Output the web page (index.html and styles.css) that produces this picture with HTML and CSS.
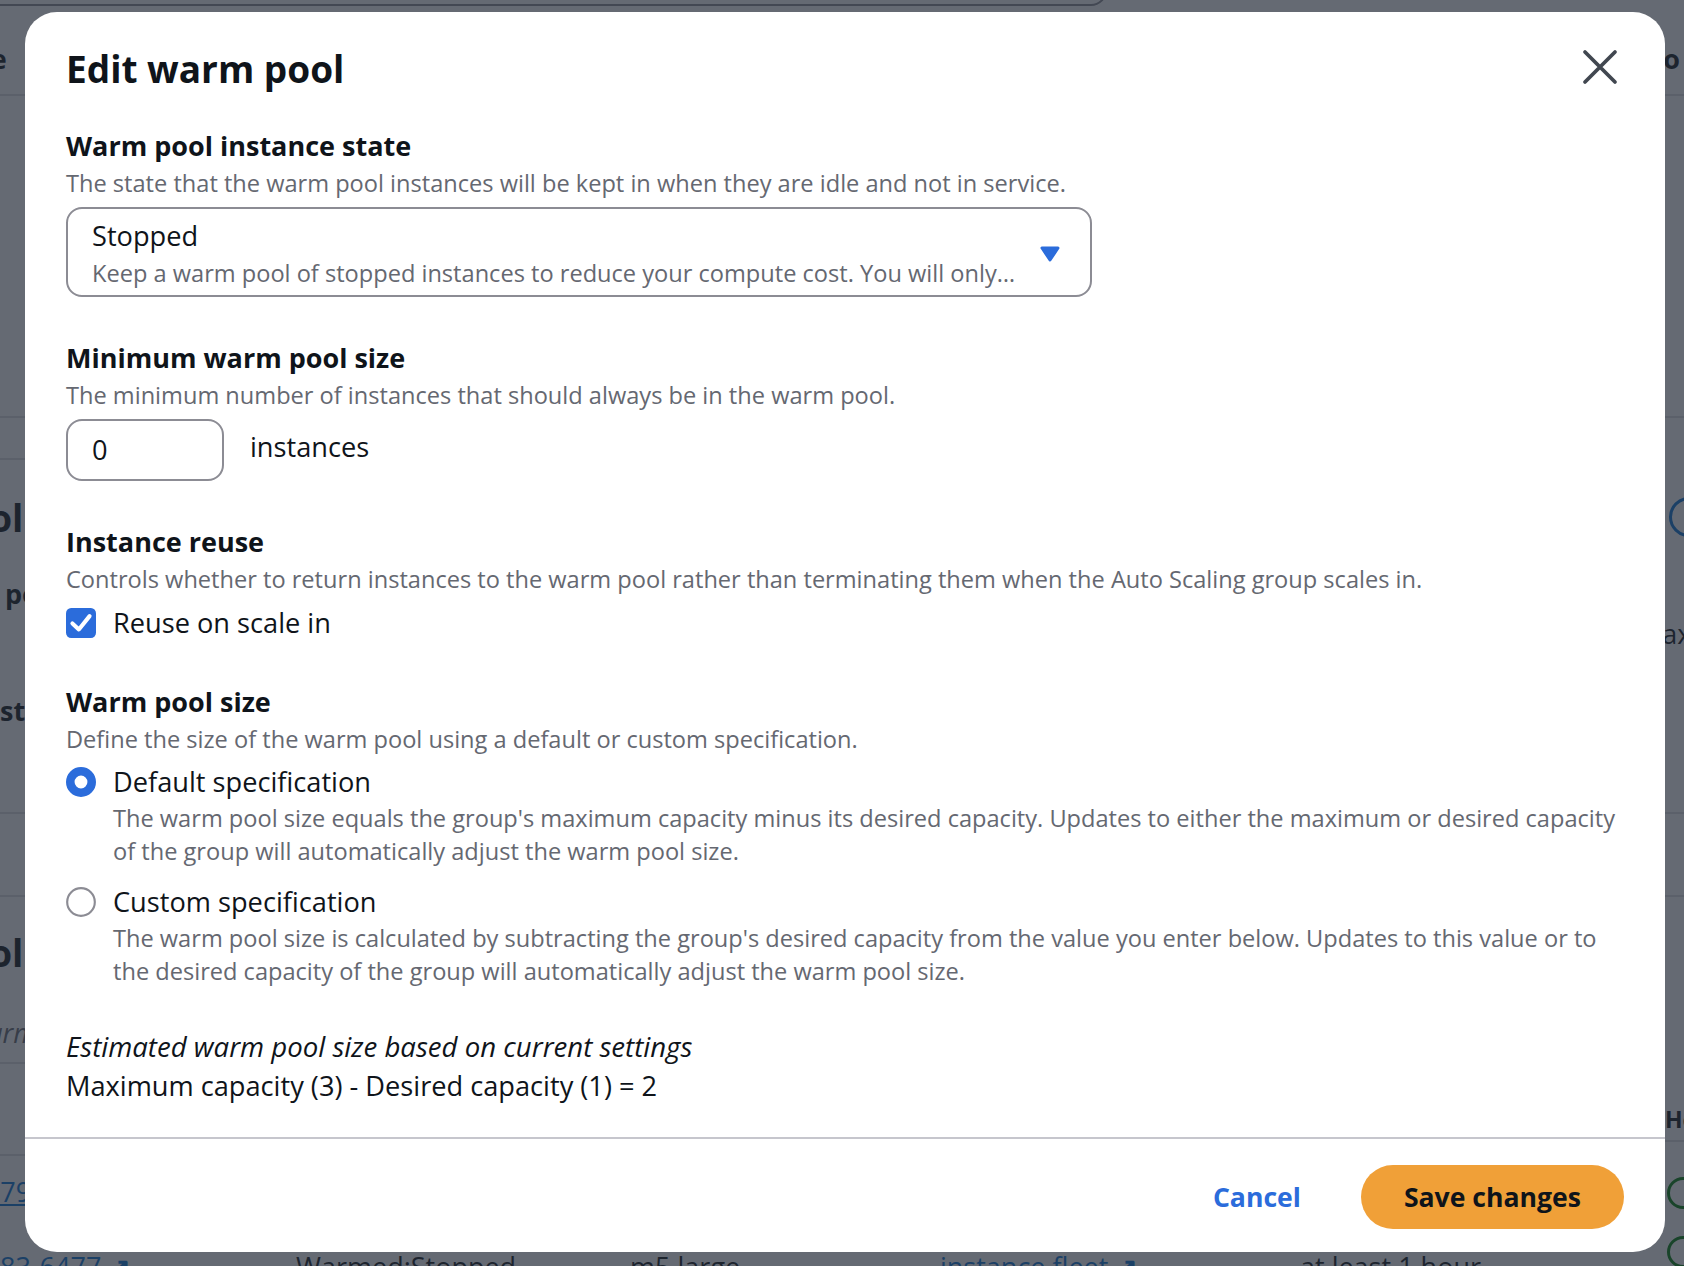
FILE: index.html
```html
<!DOCTYPE html>
<html lang="en">

<head>
    <meta charset="UTF-8">
    <meta name="viewport" content="width=device-width, initial-scale=1.0">
    <title>Edit warm pool</title>
    <link rel="stylesheet" href="styles.css">
</head>

<body>
    <!-- page behind the modal, only its edges show -->
    <div class="page">
        <div class="page-card"></div>
        <div class="rule rule-left" style="top: 94px"></div>
        <div class="rule rule-left" style="top: 416px"></div>
        <div class="rule rule-left" style="top: 458px"></div>
        <div class="rule rule-left" style="top: 812px"></div>
        <div class="rule rule-left" style="top: 895px"></div>
        <div class="rule rule-left" style="top: 1062px"></div>
        <div class="rule rule-left" style="top: 1154px"></div>
        <div class="rule rule-right" style="top: 94px"></div>
        <div class="rule rule-right" style="top: 416px"></div>
        <div class="rule rule-right" style="top: 812px"></div>
        <div class="rule rule-right" style="top: 895px"></div>
        <div class="rule rule-right" style="top: 1140px"></div>

        <span class="frag frag-bold" style="top: 41px; left: -74px">Name</span>
        <span class="frag frag-title" style="top: 494px; left: -178px">Warm pool</span>
        <span class="frag frag-bold" style="top: 576px; left: 5px">pool size</span>
        <span class="frag frag-bold" style="top: 693px; left: 0">state</span>
        <span class="frag frag-title" style="top: 929px; left: -178px">Warm pool</span>
        <span class="frag frag-italic" style="top: 1015px; left: -32px">warm</span>
        <span class="frag frag-link" style="top: 1174px; left: -106px">i-0ab4c979</span>

        <span class="frag" style="top: 1249px; left: 0"><span class="frag-link">83-6477</span> <span class="ext">&#8599;</span></span>
        <span class="frag" style="top: 1249px; left: 296px">Warmed:Stopped</span>
        <span class="frag" style="top: 1249px; left: 630px">m5.large</span>
        <span class="frag" style="top: 1249px; left: 940px"><span class="frag-link">instance fleet</span> <span class="ext">&#8599;</span></span>
        <span class="frag" style="top: 1249px; left: 1300px">at least 1 hour</span>

        <span class="frag frag-bold" style="top: 41px; left: 1648px">Lo</span>
        <span class="ring" style="top: 497px; left: 1669px"></span>
        <span class="frag" style="top: 616px; left: 1638px">Max</span>
        <span class="frag frag-bold frag-small" style="top: 1101px; left: 1665px">He</span>
        <span class="ok" style="top: 1177px; left: 1667px"></span>
        <span class="ok" style="top: 1236px; left: 1667px"></span>
    </div>

    <div class="overlay">
        <div class="modal">
            <div class="modal-header">
                <h2>Edit warm pool</h2>
                <button class="close" aria-label="Close">
                    <svg viewBox="0 0 16 16" width="40" height="40">
                        <path d="M2 2l12 12M14 2L2 14" fill="none" stroke="#414750" stroke-width="1.5" stroke-linecap="round"/>
                    </svg>
                </button>
            </div>

            <div class="modal-body">
                <div class="field">
                    <div class="label">Warm pool instance state</div>
                    <div class="desc">The state that the warm pool instances will be kept in when they are idle and not in service.</div>
                    <div class="select">
                        <div class="select-value">
                            <div class="select-title">Stopped</div>
                            <div class="select-desc">Keep a warm pool of stopped instances to reduce your compute cost. You will only pay for storage and elastic IP addresses attached to the instances.</div>
                        </div>
                        <svg viewBox="0 0 16 16" width="32" height="32">
                            <path d="M4 5h8l-4 6-4-6z" fill="#2b6cdb" stroke="#2b6cdb" stroke-width="1.5" stroke-linejoin="round"/>
                        </svg>
                    </div>
                </div>

                <div class="field">
                    <div class="label">Minimum warm pool size</div>
                    <div class="desc">The minimum number of instances that should always be in the warm pool.</div>
                    <div class="size-row">
                        <div class="number-input">0</div>
                        <span class="unit">instances</span>
                    </div>
                </div>

                <div class="field">
                    <div class="label">Instance reuse</div>
                    <div class="desc">Controls whether to return instances to the warm pool rather than terminating them when the Auto Scaling group scales in.</div>
                    <div class="check-row">
                        <svg viewBox="0 0 14 14" width="30" height="30">
                            <rect x="0" y="0" width="14" height="14" rx="2.4" fill="#2b6cdb"/>
                            <polyline points="3,7.2 6,10 11,3.8" fill="none" stroke="#fff" stroke-width="1.9" stroke-linecap="round" stroke-linejoin="round"/>
                        </svg>
                        <span>Reuse on scale in</span>
                    </div>
                </div>

                <div class="field">
                    <div class="label">Warm pool size</div>
                    <div class="desc">Define the size of the warm pool using a default or custom specification.</div>
                    <div class="radio radio-first">
                        <div class="radio-row">
                            <svg viewBox="0 0 14 14" width="30" height="30">
                                <circle cx="7" cy="7" r="5" fill="#fff" stroke="#2b6cdb" stroke-width="4"/>
                            </svg>
                            <span>Default specification</span>
                        </div>
                        <div class="radio-desc">The warm pool size equals the group's maximum capacity minus its desired capacity. Updates to either the maximum or desired capacity of the group will automatically adjust the warm pool size.</div>
                    </div>
                    <div class="radio">
                        <div class="radio-row">
                            <svg viewBox="0 0 14 14" width="30" height="30">
                                <circle cx="7" cy="7" r="6.45" fill="#fff" stroke="#8c8c94" stroke-width="1"/>
                            </svg>
                            <span>Custom specification</span>
                        </div>
                        <div class="radio-desc">The warm pool size is calculated by subtracting the group's desired capacity from the value you enter below. Updates to this value or to the desired capacity of the group will automatically adjust the warm pool size.</div>
                    </div>
                </div>

                <div class="estimate">
                    <div class="estimate-title">Estimated warm pool size based on current settings</div>
                    <div>Maximum capacity (3) - Desired capacity (1) = 2</div>
                </div>
            </div>

            <div class="modal-footer">
                <button class="btn-link">Cancel</button>
                <button class="btn-primary">Save changes</button>
            </div>
        </div>
    </div>
</body>
</html>
```
FILE: styles.css
```css
* {
    margin: 0;
    padding: 0;
    box-sizing: border-box;
}

body {
    font-family: "Open Sans", "Noto Sans", sans-serif;
    color: #0f141a;
    width: 1684px;
    height: 1266px;
    overflow: hidden;
}

/* ---------- page underneath ---------- */

.page {
    position: fixed;
    inset: 0;
    background-color: #fff;
    overflow: hidden;
}

.page-card {
    position: absolute;
    top: -40px;
    left: -20px;
    width: 1127px;
    height: 46px;
    border: 2px solid #8c8c94;
    border-radius: 16px;
}

.rule {
    position: absolute;
    height: 2px;
    width: 70px;
    background-color: #dcdee2;
}

.rule-left {
    left: 0;
}

.rule-right {
    right: 0;
}

.frag {
    position: absolute;
    white-space: nowrap;
    font-size: 27px;
    line-height: 36px;
}

.frag-bold {
    font-weight: 700;
}

.frag-small {
    font-size: 23px;
}

.frag-title {
    font-size: 37px;
    line-height: 48px;
    font-weight: 700;
}

.frag-italic {
    font-style: italic;
    color: #656871;
}

.frag-link {
    color: #0972d3;
    text-decoration: underline;
}

.ext {
    color: #0972d3;
    font-weight: 700;
}

.ring {
    position: absolute;
    width: 40px;
    height: 40px;
    border: 3px solid #0972d3;
    border-radius: 50%;
}

.ok {
    position: absolute;
    width: 32px;
    height: 32px;
    border: 3px solid #037f0c;
    border-radius: 50%;
}

/* ---------- modal ---------- */

.overlay {
    position: fixed;
    inset: 0;
    background-color: rgba(35, 43, 55, 0.7);
    padding: 12px 0 0 25px;
}

.modal {
    width: 1640px;
    background-color: #fff;
    border-radius: 32px;
    overflow: hidden;
}

.modal-header {
    display: flex;
    justify-content: space-between;
    align-items: center;
    padding: 33px 41px 0 41px;
}

.modal-header h2 {
    font-size: 37px;
    line-height: 48px;
    font-weight: 700;
}

.close {
    background: none;
    border: none;
    padding: 4px;
    display: flex;
    margin-top: -4px;
}

.modal-body {
    padding: 35px 41px 31px 41px;
    display: flex;
    flex-direction: column;
    gap: 43px;
}

.label {
    font-size: 27px;
    line-height: 36px;
    font-weight: 700;
}

.desc {
    margin-top: 3px;
    font-size: 23.6px;
    line-height: 32px;
    color: #656871;
}

/* select */

.select {
    margin-top: 8px;
    width: 1026px;
    display: flex;
    align-items: center;
    border: 2px solid #8c8c94;
    border-radius: 16px;
    padding: 10px 24px 6px 24px;
}

.select-value {
    flex: 1;
    min-width: 0;
    padding-right: 18px;
}

.select-title {
    font-size: 27.2px;
    line-height: 34px;
}

.select-desc {
    margin-top: 4px;
    font-size: 23.6px;
    line-height: 32px;
    color: #656871;
    white-space: nowrap;
    overflow: hidden;
    text-overflow: ellipsis;
}

/* number input */

.size-row {
    margin-top: 8px;
    display: flex;
    align-items: flex-start;
    gap: 26px;
}

.number-input {
    width: 158px;
    height: 62px;
    border: 2px solid #8c8c94;
    border-radius: 16px;
    padding: 0 24px;
    font-size: 27.2px;
    line-height: 58px;
}

.unit {
    font-size: 27.2px;
    line-height: 36px;
    padding-top: 10px;
}

/* checkbox + radio */

.check-row,
.radio-row {
    display: flex;
    align-items: center;
    gap: 17px;
    font-size: 27.2px;
    line-height: 36px;
}

.check-row {
    margin-top: 10px;
}

.radio {
    margin-top: 16px;
}

.radio-first {
    margin-top: 9px;
}

.radio-desc {
    margin-top: 2px;
    padding-left: 47px;
    font-size: 23.6px;
    line-height: 33px;
    color: #656871;
}

/* estimate */

.estimate {
    margin-top: -5px;
    font-size: 27.2px;
    line-height: 40px;
}

.estimate-title {
    font-style: italic;
    font-size: 27.6px;
}

/* footer */

.modal-footer {
    border-top: 2px solid #c6c6cd;
    padding: 26px 41px 23px 41px;
    display: flex;
    justify-content: flex-end;
    align-items: center;
}

.btn-link {
    background: none;
    border: none;
    font-family: inherit;
    font-size: 26.6px;
    font-weight: 700;
    color: #2b6cdb;
    margin-right: 60px;
}

.btn-primary {
    font-family: inherit;
    height: 64px;
    padding: 0 43px;
    border: none;
    border-radius: 32px;
    background-color: #f0a038;
    color: #0f141a;
    font-size: 26.6px;
    font-weight: 700;
}
```
